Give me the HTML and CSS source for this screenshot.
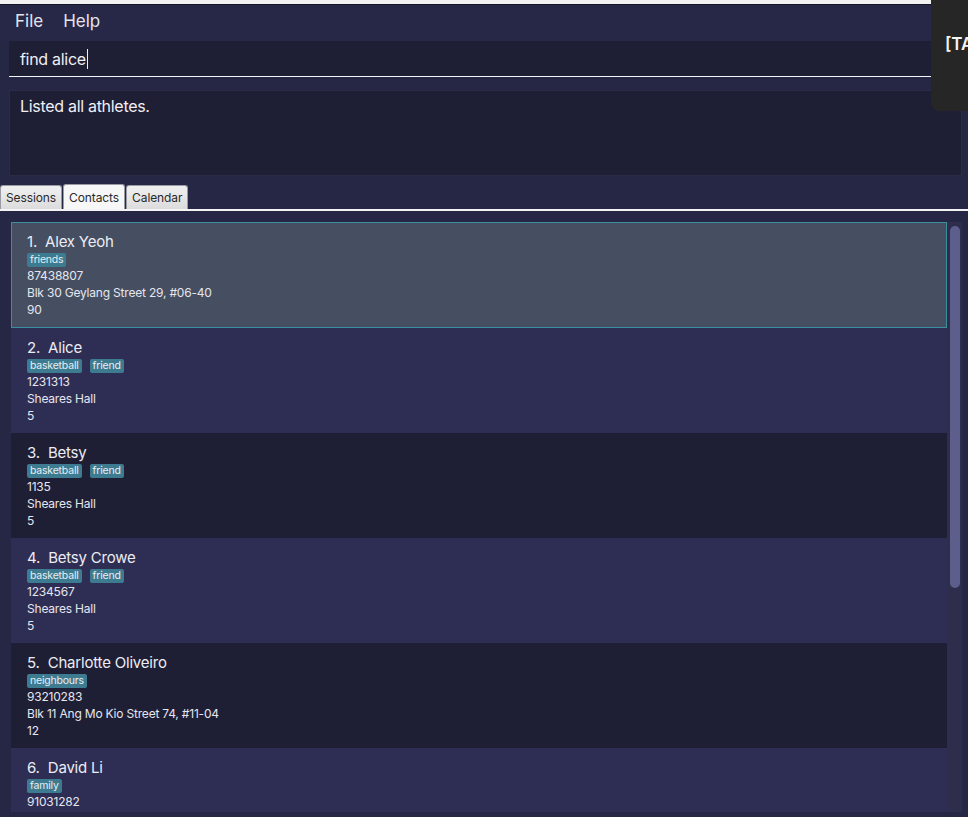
FILE: index.html
```html
<!DOCTYPE html>
<html>
<head>
<meta charset="utf-8">
<link rel="stylesheet" href="styles.css">
</head>
<body>
<div class="topstrip"></div>
<div class="menubar"><span class="menu">File</span><span class="menu">Help</span></div>
<div class="cmd"><span class="cmd-text">find alice</span><span class="caret"></span></div>
<div class="result">Listed all athletes.</div>
<div class="tabs">
  <div class="tab">Sessions</div>
  <div class="tab active">Contacts</div>
  <div class="tab">Calendar</div>
</div>
<div class="listpane">
  <div class="list">
    <div class="card selected">
      <div class="name">1.&nbsp; Alex Yeoh</div>
      <div class="tags"><span class="tag">friends</span></div>
      <div class="line">87438807</div>
      <div class="line">Blk 30 Geylang Street 29, #06-40</div>
      <div class="line">90</div>
    </div>
    <div class="card odd">
      <div class="name">2.&nbsp; Alice</div>
      <div class="tags"><span class="tag">basketball</span><span class="tag">friend</span></div>
      <div class="line">1231313</div>
      <div class="line">Sheares Hall</div>
      <div class="line">5</div>
    </div>
    <div class="card even">
      <div class="name">3.&nbsp; Betsy</div>
      <div class="tags"><span class="tag">basketball</span><span class="tag">friend</span></div>
      <div class="line">1135</div>
      <div class="line">Sheares Hall</div>
      <div class="line">5</div>
    </div>
    <div class="card odd">
      <div class="name">4.&nbsp; Betsy Crowe</div>
      <div class="tags"><span class="tag">basketball</span><span class="tag">friend</span></div>
      <div class="line">1234567</div>
      <div class="line">Sheares Hall</div>
      <div class="line">5</div>
    </div>
    <div class="card even">
      <div class="name">5.&nbsp; Charlotte Oliveiro</div>
      <div class="tags"><span class="tag">neighbours</span></div>
      <div class="line">93210283</div>
      <div class="line">Blk 11 Ang Mo Kio Street 74, #11-04</div>
      <div class="line">12</div>
    </div>
    <div class="card odd last">
      <div class="name">6.&nbsp; David Li</div>
      <div class="tags"><span class="tag">family</span></div>
      <div class="line">91031282</div>
    </div>
  </div>
  <div class="scrolltrack"><div class="thumb"></div></div>
</div>
<div class="popup">[TA</div>
</body>
</html>
```
FILE: styles.css
```css
html, body {
  margin: 0;
  padding: 0;
  width: 968px;
  height: 817px;
  overflow: hidden;
  background: #262645;
  font-family: Inter, "Open Sans", sans-serif;
  color: #e6e6ee;
  position: relative;
}
.topstrip {
  height: 4px;
  background: #f2f2f2;
  border-bottom: 1px solid #141424;
}
.menubar {
  height: 36px;
  box-sizing: border-box;
  display: flex;
  align-items: center;
  padding: 0 0 4px 15px;
  gap: 20px;
  font-size: 17px;
  color: #e4e4ea;
  background: #272748;
}
.cmd {
  margin-left: 9px;
  height: 35px;
  background: #1e1e34;
  border-bottom: 1px solid #f4f4f4;
  display: flex;
  align-items: center;
  padding-left: 11px;
  font-size: 16px;
  color: #f0f0f4;
  letter-spacing: -0.3px;
}
.caret {
  display: inline-block;
  width: 1px;
  height: 20px;
  background: #f0f0f0;
  margin-left: 1px;
}
.result {
  margin: 13px 6px 0 9px;
  background: #1e1e34;
  border: 1px solid #2b2b48;
  box-sizing: border-box;
  height: 86px;
  padding: 5px 0 0 10px;
  font-size: 16px;
  color: #f0f0f4;
  letter-spacing: -0.3px;
}
.tabs {
  margin-top: 8px;
  display: flex;
  gap: 1px;
  height: 25px;
  align-items: flex-end;
  border-bottom: 2px solid #f4f4f4;
}
.tab {
  height: 24px;
  box-sizing: border-box;
  padding: 0 5px;
  border: 1px solid #9a9aa4;
  border-bottom: none;
  border-radius: 3px 3px 0 0;
  background: linear-gradient(#f0f0f0, #dcdcdc);
  color: #2a2a2a;
  font-size: 12px;
  display: flex;
  align-items: center;
  letter-spacing: -0.1px;
}
.tab.active {
  background: #f7f7f7;
  height: 25px;
}
.listpane {
  display: flex;
  padding: 11px 6px 0 11px;
  height: 590px;
  overflow: hidden;
}
.list {
  width: 936px;
  flex: none;
}
.card {
  height: 105px;
  box-sizing: border-box;
  padding: 10px 0 0 16px;
}
.card.last {
  height: 65px;
}
.card.selected {
  background: #454f61;
  border: 1px solid #3a8e9e;
  height: 106px;
  padding: 9px 0 0 15px;
}
.card.odd { background: #2e2e55; }
.card.even { background: #1e1e35; }
.name {
  font-size: 15px;
  height: 20px;
  line-height: 20px;
  color: #ececf2;
  letter-spacing: -0.2px;
}
.tags {
  display: flex;
  gap: 8px;
  height: 15px;
  align-items: flex-start;
  padding-top: 1px;
  box-sizing: border-box;
}
.tag {
  background: #3d7b90;
  color: #e8eef2;
  font-size: 10.5px;
  line-height: 14px;
  height: 14px;
  padding: 0 3px;
  border-radius: 2px;
  letter-spacing: -0.2px;
}
.line {
  font-size: 12px;
  line-height: 17px;
  color: #e6e6ee;
  letter-spacing: -0.2px;
}
.scrolltrack {
  width: 15px;
  background: #2e2e4c;
  padding: 4px 2px 0 3px;
  box-sizing: border-box;
  height: 590px;
}
.thumb {
  width: 10px;
  height: 362px;
  background: #5e5e8c;
  border-radius: 5px;
}
.popup {
  position: absolute;
  top: 0;
  left: 931px;
  width: 37px;
  height: 111px;
  background: #262626;
  border-radius: 0 0 0 8px;
  color: #f4f4f4;
  font-size: 17px;
  font-weight: 600;
  padding: 34px 0 0 14px;
  box-sizing: border-box;
  white-space: nowrap;
  overflow: hidden;
}
```
